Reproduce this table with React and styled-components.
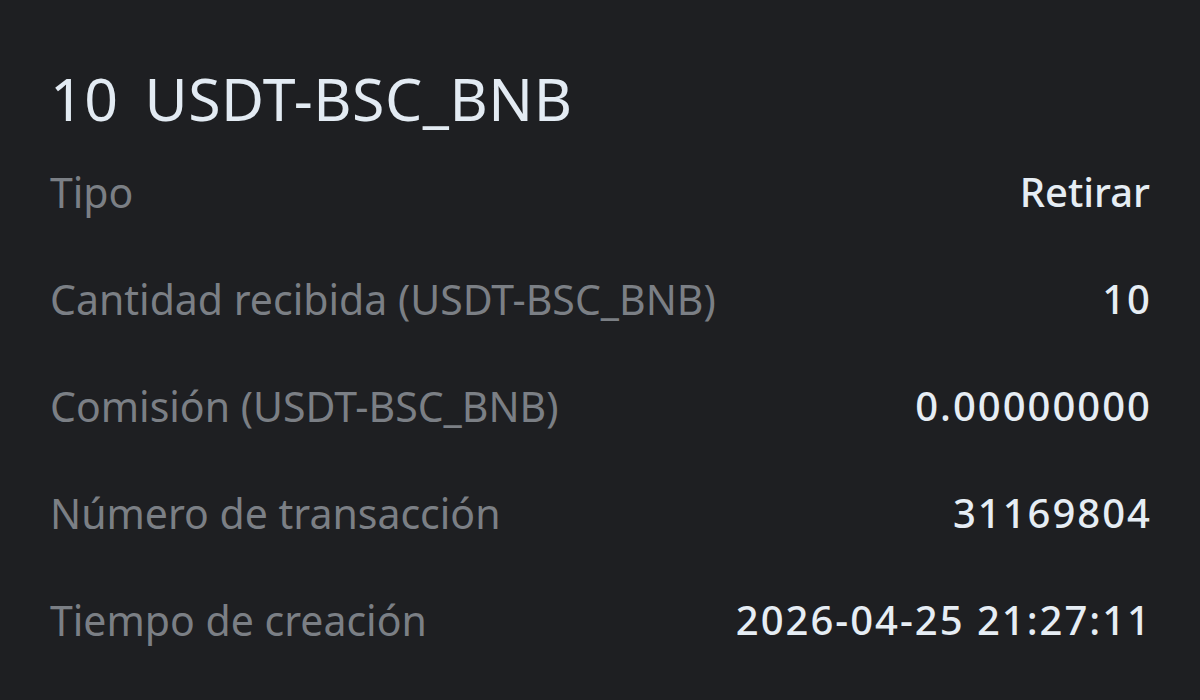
import styled, { createGlobalStyle } from 'styled-components';

const GlobalStyle = createGlobalStyle`
  html, body {
    margin: 0;
    padding: 0;
    background: #1e1f22;
  }
  body {
    font-family: "Noto Sans", "Liberation Sans", sans-serif;
  }
`;

const rows = [
  { label: 'Tipo', value: 'Retirar' },
  { label: 'Cantidad recibida (USDT-BSC_BNB)', value: '10', numeric: true },
  { label: 'Comisión (USDT-BSC_BNB)', value: '0.00000000', numeric: true },
  { label: 'Número de transacción', value: '31169804', numeric: true },
  { label: 'Tiempo de creación', value: '2026-04-25 21:27:11', numeric: true },
];

const App = () => {
  return (
    <>
      <GlobalStyle />
      <Wrapper>
        <Title>
          <span>10</span>
          <span>USDT-BSC_BNB</span>
        </Title>
        <List>
          {rows.map((row) => (
            <Row key={row.label}>
              <Label>{row.label}</Label>
              <Value $numeric={row.numeric}>{row.value}</Value>
            </Row>
          ))}
        </List>
      </Wrapper>
    </>
  );
};

export default App;

const Wrapper = styled.div`
  width: 1200px;
  height: 700px;
  box-sizing: border-box;
  padding: 0 50px;
  background: #1e1f22;
  overflow: hidden;
`;

const Title = styled.h1`
  margin: 0;
  height: 138px;
  box-sizing: border-box;
  padding-top: 58px;
  display: flex;
  align-items: center;
  gap: 26px;
  font-size: 59px;
  font-weight: 400;
  color: #e3ebf3;
  letter-spacing: 0.5px;
`;

const List = styled.div`
  display: flex;
  flex-direction: column;
`;

const Row = styled.div`
  height: 107px;
  display: flex;
  align-items: center;
  justify-content: space-between;
`;

const Label = styled.span`
  font-size: 41px;
  color: #7b7f85;
`;

const Value = styled.span`
  font-size: 40px;
  font-weight: 500;
  color: #e6edf4;
  letter-spacing: ${(p) => (p.$numeric ? '2px' : '0')};
  margin-right: ${(p) => (p.$numeric ? '-2px' : '0')};
`;
